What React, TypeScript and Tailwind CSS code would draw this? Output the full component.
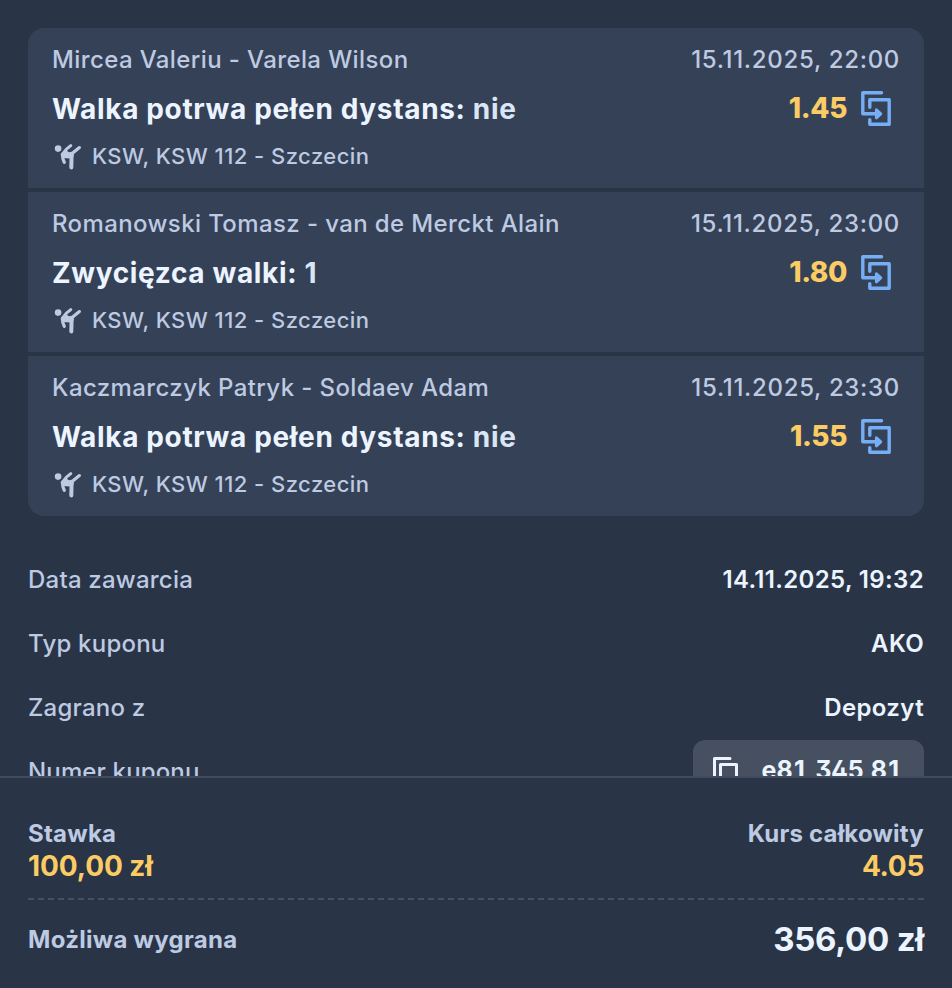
interface Bet {
  id: number;
  event: string;
  date: string;
  market: string;
  pick: string;
  odds: string;
  league: string;
}

const bets: Bet[] = [
  {
    id: 1,
    event: "Mircea Valeriu - Varela Wilson",
    date: "15.11.2025, 22:00",
    market: "Walka potrwa pełen dystans:",
    pick: "nie",
    odds: "1.45",
    league: "KSW, KSW 112 - Szczecin",
  },
  {
    id: 2,
    event: "Romanowski Tomasz - van de Merckt Alain",
    date: "15.11.2025, 23:00",
    market: "Zwycięzca walki:",
    pick: "1",
    odds: "1.80",
    league: "KSW, KSW 112 - Szczecin",
  },
  {
    id: 3,
    event: "Kaczmarczyk Patryk - Soldaev Adam",
    date: "15.11.2025, 23:30",
    market: "Walka potrwa pełen dystans:",
    pick: "nie",
    odds: "1.55",
    league: "KSW, KSW 112 - Szczecin",
  },
];

const details = [
  { label: "Data zawarcia", value: "14.11.2025, 19:32" },
  { label: "Typ kuponu", value: "AKO" },
  { label: "Zagrano z", value: "Depozyt" },
];

function FightIcon() {
  return (
    <svg viewBox="0 0 28 28" className="h-7 w-7 shrink-0" fill="none" stroke="currentColor" strokeLinecap="round" strokeLinejoin="round">
      <circle cx="4.1" cy="6.6" r="3.3" fill="currentColor" stroke="none" />
      <path d="M8.2 12.4 12.4 7.2 16.8 3.6" strokeWidth="3" />
      <path d="M17.5 12 25.4 5.6" strokeWidth="3.2" />
      <path d="M7 11.4 12.4 8.4 15 10.2 18.6 9.8 20 14 17 16.4 8 16Z" fill="currentColor" stroke="none" />
      <path d="M8.4 13 9 17 10.3 20.4" strokeWidth="3.2" />
      <path d="M17.6 13 17.3 25.4" strokeWidth="4" />
    </svg>
  );
}

function CopyBetIcon() {
  return (
    <svg viewBox="0 0 32 36" className="h-9 w-8 shrink-0" fill="none" stroke="currentColor" strokeWidth="3.4" strokeLinecap="round" strokeLinejoin="round">
      <path d="M21.6 2.8H2.8v21H19" />
      <path d="M9.8 17.2V9.8h19.4v24.4H9.8v-4.4" />
      <path d="M16.4 19.8 20.8 23.8 16.4 27.8Z" fill="currentColor" strokeWidth="3" />
    </svg>
  );
}

function CopyIcon() {
  return (
    <svg viewBox="0 0 28 32" className="h-8 w-7 shrink-0" fill="none" stroke="currentColor" strokeWidth="3" strokeLinecap="round" strokeLinejoin="round">
      <path d="M19 2.5H3.5V24" />
      <path d="M9.5 8.5h16v22h-16Z" />
    </svg>
  );
}

function BetRow({ bet }: { bet: Bet }) {
  return (
    <div className="flex h-40 flex-col bg-[#354157] px-6 pt-4">
      <div className="flex items-center justify-between text-2xl leading-8">
        <span className="font-[450] tracking-[0.39px]">{bet.event}</span>
        <span className="font-[550] tracking-[0.69px]">{bet.date}</span>
      </div>
      <div className="mt-3 flex h-10 items-center justify-between text-[28px]">
        <span className="pt-0.5 font-[650] tracking-[0.65px] text-[#ebf4ff]">
          {bet.market} <span className="text-[#dae6f5]">{bet.pick}</span>
        </span>
        <div className="flex items-center gap-[13px] pr-2 text-[#76aef5]">
          <span className="font-extrabold tracking-[-0.4px] text-[#fbcc64]">{bet.odds}</span>
          <CopyBetIcon />
        </div>
      </div>
      <div className="mt-3 flex h-8 items-center gap-2.5 pl-0.5 text-[22px]">
        <FightIcon />
        <span className="font-[450] tracking-[0.46px]">{bet.league}</span>
      </div>
    </div>
  );
}

export default function App() {
  return (
    <div className="flex h-[988px] w-[952px] flex-col overflow-hidden bg-[#2a3447] font-['Inter',sans-serif] text-[#bdcae2]">
      <div className="h-[776px] shrink-0 overflow-hidden px-7 pt-7">
        <div className="flex flex-col gap-1 overflow-hidden rounded-2xl">
          {bets.map((bet) => (
            <BetRow key={bet.id} bet={bet} />
          ))}
        </div>

        <div className="mt-8 text-2xl">
          {details.map((item) => (
            <div key={item.label} className="flex h-16 items-center justify-between">
              <span className="font-[450] tracking-[0.22px]">{item.label}</span>
              <span className="font-semibold tracking-[0.35px] text-[#ebf4ff]">{item.value}</span>
            </div>
          ))}
          <div className="flex h-16 items-center justify-between">
            <span className="font-[450] tracking-[0.15px]">Numer kuponu</span>
            <button className="flex h-16 w-[231px] items-center justify-between rounded-xl bg-[#465060] pr-[21px] pl-[18px] text-[#ebf4ff]">
              <CopyIcon />
              <span className="pb-0.5 text-[25px] font-bold [font-feature-settings:'cv09','ss01','tnum']">e81 345 81</span>
            </button>
          </div>
        </div>
      </div>

      {/* sticky summary */}
      <div className="flex-1 border-t-2 border-[#414c5e] px-7 pt-10 font-bold">
        <div className="flex justify-between">
          <div className="flex flex-col">
            <span className="text-2xl tracking-[0.24px]">Stawka</span>
            <span className="text-[28px] leading-8 tracking-[-0.1px] text-[#fbcc64]">100,00 zł</span>
          </div>
          <div className="flex flex-col items-end">
            <span className="text-2xl tracking-[0.2px]">Kurs całkowity</span>
            <span className="text-[28px] leading-8 tracking-[-0.3px] text-[#fbcc64]">4.05</span>
          </div>
        </div>
        <div className="mt-4 h-0.5 bg-[repeating-linear-gradient(90deg,#465061_0_6px,transparent_6px_10px)]" />
        <div className="mt-4 flex h-12 items-center justify-between">
          <span className="text-2xl tracking-[0.28px]">Możliwa wygrana</span>
          <span className="text-[33px] tracking-[-0.25px] text-[#ebf4ff]">356,00 zł</span>
        </div>
      </div>
    </div>
  );
}
